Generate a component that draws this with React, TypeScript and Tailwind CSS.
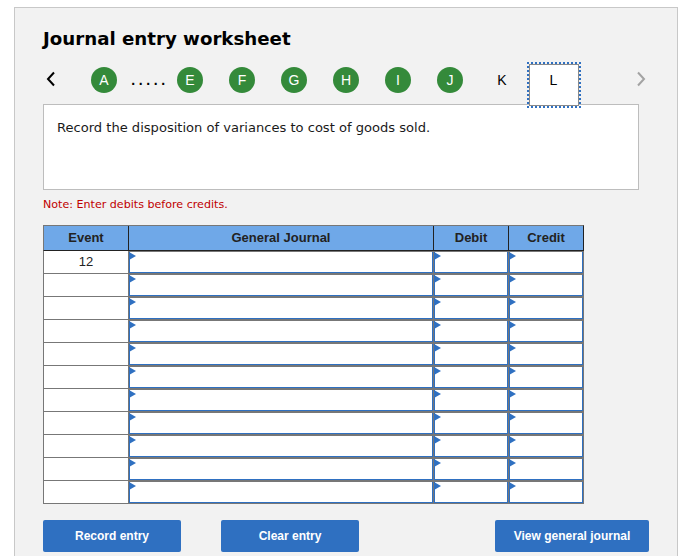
const letters = ['E', 'F', 'G', 'H', 'I', 'J'];
const rows = Array.from({ length: 11 }, (_, i) => i);

function Circle({ label }: { label: string }) {
  return (
    <div className="w-[26px] h-[26px] rounded-full bg-[#348a3a] text-white flex items-center justify-center text-[14px] font-['Liberation_Sans',sans-serif] shrink-0">
      {label}
    </div>
  );
}

function Chevron({ flip, color }: { flip?: boolean; color: string }) {
  return (
    <svg width="10" height="16" viewBox="0 0 10 16" fill="none">
      <path d={flip ? 'M2 1.5 L8 8 L2 14.5' : 'M8 1.5 L2 8 L8 14.5'} stroke={color} strokeWidth="2" />
    </svg>
  );
}

function EntryCell() {
  return (
    <div className="relative h-[23px] bg-[#777] pl-px pt-[2px]">
      <div className="h-full bg-white border-x border-b border-[#2f70c1]" />
      <div className="absolute left-[1px] top-[2px] w-0 h-0 border-y-[4px] border-y-transparent border-l-[7px] border-l-[#2f70c1]" />
    </div>
  );
}

function Button({ label, className }: { label: string; className: string }) {
  return (
    <button className={`h-[32px] rounded-[2px] bg-[#2f70c1] text-white text-[12px] font-bold font-['Liberation_Sans',sans-serif] ${className}`}>
      {label}
    </button>
  );
}

export default function App() {
  return (
    <div className="w-[690px] h-[556px] overflow-hidden bg-white pt-[7px] pl-[14px]">
      <div className="w-[664px] h-[600px] border border-[#c8c8c8] bg-[#f2f2f2] pl-[28px] pt-[19px]">
        <h1 className="h-[24px] leading-[24px] text-[18.2px] font-bold text-black font-['DejaVu_Sans',sans-serif]">
          Journal entry worksheet
        </h1>

        <div className="mt-[13px] h-[40px] flex items-start relative z-10">
          <div className="w-[48px] h-[30px] pl-[3px] flex items-center shrink-0">
            <Chevron color="#000" />
          </div>
          <div className="mt-[3px] flex items-center">
            <Circle label="A" />
            <div className="w-[60px] pl-[6px] text-center text-[14px] font-bold tracking-[3.6px] text-black font-['Liberation_Sans',sans-serif]">
              .....
            </div>
            <div className="flex gap-[26px]">
              {letters.map((l) => (
                <Circle key={l} label={l} />
              ))}
            </div>
          </div>
          <div className="w-[52px] ml-[13px] mt-[3px] h-[26px] leading-[26px] text-center text-[14px] text-black font-['Liberation_Sans',sans-serif]">
            K
          </div>
          <div className="w-[50px] h-[42px] ml-[1px] bg-white border border-[#8a8a8a] outline-2 outline-dotted outline-[#2f70c1] flex items-center justify-center text-[14px] pb-[10px] pr-[1px] text-black font-['Liberation_Sans',sans-serif]">
            L
          </div>
          <div className="ml-[57px] h-[30px] flex items-center">
            <Chevron flip color="#a3a3a3" />
          </div>
        </div>

        <div className="w-[596px] h-[86px] bg-white border border-[#bdbdbd] pl-[13px] pt-[15px] text-[13.07px] leading-[16px] text-[#1a1a1a] font-['DejaVu_Sans',sans-serif]">
          Record the disposition of variances to cost of goods sold.
        </div>

        <p className="mt-[8px] h-[14px] leading-[14px] text-[11.1px] text-[#c00000] font-['DejaVu_Sans',sans-serif]">
          Note: Enter debits before credits.
        </p>

        <div className="mt-[13px] w-[541px] font-['Liberation_Sans',sans-serif] border-b border-[#777]">
          <div className="relative z-10 grid grid-cols-[85px_305px_75px_74px] h-[26px] bg-[#6fa8e8] border-t border-l border-[#777] border-r-[#222] border-r border-b border-b-[#222] text-[13px] font-bold text-[#222] text-center leading-[23px]">
            <div className="border-r border-[#222]">Event</div>
            <div className="border-r border-[#222]">General Journal</div>
            <div className="border-r border-[#222]">Debit</div>
            <div>Credit</div>
          </div>
          <div className="-mt-px">
            {rows.map((i) => (
              <div key={i} className="grid grid-cols-[84px_305px_75px_75px] bg-[#777] border-x border-[#777]">
                <div className="h-[23px] bg-white border-t border-[#777] text-center text-[13px] leading-[22px] text-[#222]">
                  {i === 0 ? '12' : ''}
                </div>
                <EntryCell />
                <EntryCell />
                <EntryCell />
              </div>
            ))}
          </div>
        </div>

        <div className="mt-[16px] flex">
          <Button label="Record entry" className="w-[138px]" />
          <Button label="Clear entry" className="w-[138px] ml-[40px]" />
          <Button label="View general journal" className="w-[154px] ml-[136px]" />
        </div>
      </div>
    </div>
  );
}
